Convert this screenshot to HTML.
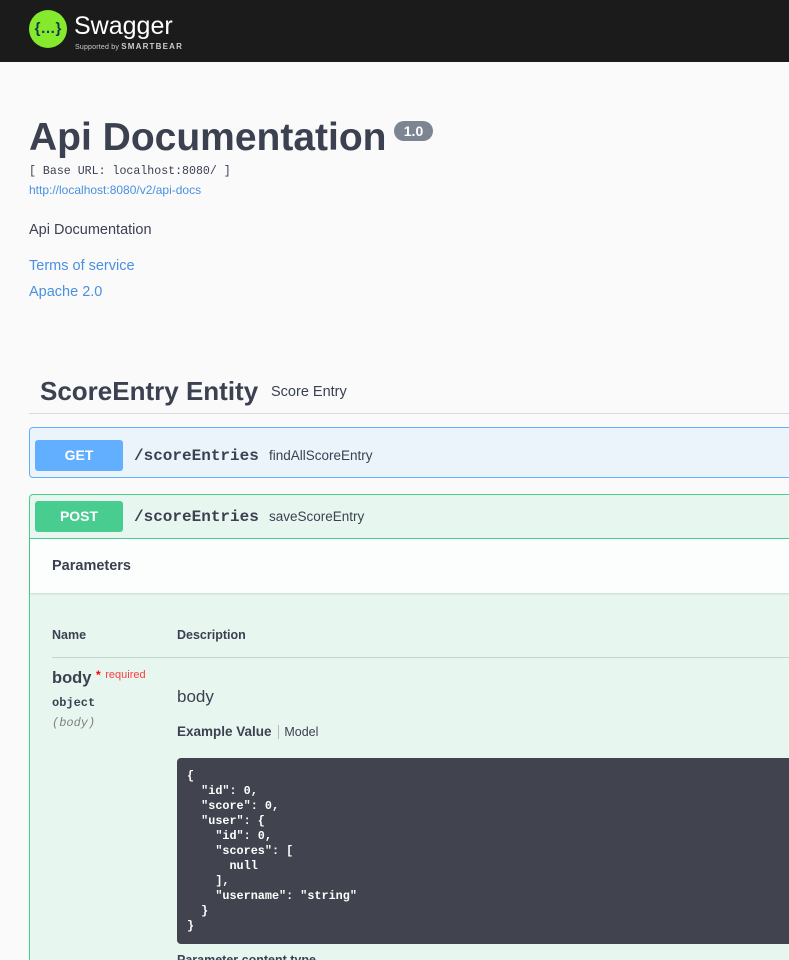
<!DOCTYPE html>
<html><head><style>
*{margin:0;padding:0;box-sizing:border-box}
html,body{width:789px;height:960px;overflow:hidden}
body{background:#fafafa;font-family:"Liberation Sans",sans-serif;color:#3b4151;position:relative}
.hdr{position:absolute;left:0;top:0;width:789px;height:62px;background:#1b1b1b}
.abs{position:absolute;white-space:nowrap}
a{color:#4990e2;text-decoration:none}
.mono{font-family:"Liberation Mono",monospace}
</style></head><body>
<div class="hdr">
 <div class="abs" style="left:29px;top:10px;width:38px;height:38px;border-radius:50%;background:#85ea2d;color:#173647;font-weight:bold;font-size:15px;text-align:center;line-height:37px">{…}</div>
 <div class="abs" style="left:74px;top:12px;color:#fff;font-size:25px">Swagger</div>
 <div class="abs" style="left:75px;top:42px;color:#ccc;font-size:7px;letter-spacing:.2px">Supported by <b style="font-size:8px;letter-spacing:1.2px">SMARTBEAR</b></div>
</div>
<div class="abs" style="left:29px;top:116px;font-size:39px;font-weight:bold">Api Documentation</div>
<div class="abs" style="left:394px;top:121px;width:39px;height:20px;border-radius:10px;background:#7d8492;color:#fff;font-size:14px;font-weight:bold;text-align:center;line-height:20px">1.0</div>
<div class="abs mono" style="left:29px;top:165px;font-size:11.6px">[ Base URL: localhost:8080/ ]</div>
<div class="abs" style="left:29px;top:183px;font-size:12px"><a>http://localhost:8080/v2/api-docs</a></div>
<div class="abs" style="left:29px;top:222px;font-size:14.5px">Api Documentation</div>
<div class="abs" style="left:29px;top:258px;font-size:14.5px"><a>Terms of service</a></div>
<div class="abs" style="left:29px;top:284px;font-size:14.5px"><a>Apache 2.0</a></div>
<div class="abs" style="left:40px;top:376px;font-size:26px;font-weight:bold">ScoreEntry Entity</div>
<div class="abs" style="left:271px;top:384px;font-size:14.5px">Score Entry</div>
<div class="abs" style="left:29px;top:413px;width:760px;height:1px;background:#d8dae0"></div>
<div class="abs" style="left:29px;top:427px;width:770px;height:51px;border:1px solid #61affe;border-radius:4px;background:#ebf3fb"></div>
<div class="abs" style="left:35px;top:440px;width:88px;height:31px;border-radius:3px;background:#61affe;color:#fff;font-weight:bold;font-size:14px;text-align:center;line-height:31px">GET</div>
<div class="abs mono" style="left:134px;top:447px;font-size:16px;font-weight:bold">/scoreEntries</div>
<div class="abs" style="left:269px;top:448px;font-size:13.5px">findAllScoreEntry</div>
<div class="abs" style="left:29px;top:494px;width:770px;height:480px;border:1px solid #49cc90;border-radius:4px;background:#e8f6f0"></div>
<div class="abs" style="left:35px;top:501px;width:88px;height:31px;border-radius:3px;background:#49cc90;color:#fff;font-weight:bold;font-size:14px;text-align:center;line-height:31px">POST</div>
<div class="abs mono" style="left:134px;top:508px;font-size:16px;font-weight:bold">/scoreEntries</div>
<div class="abs" style="left:269px;top:509px;font-size:13.5px">saveScoreEntry</div>
<div class="abs" style="left:30px;top:538px;width:760px;height:55px;background:#fcfdfd;border-top:1px solid #49cc90;box-shadow:0 1px 2px rgba(0,0,0,.12)"></div>
<div class="abs" style="left:52px;top:558px;font-size:14.5px;font-weight:bold">Parameters</div>
<div class="abs" style="left:52px;top:628px;font-size:12.5px;font-weight:bold">Name</div>
<div class="abs" style="left:177px;top:628px;font-size:12.5px;font-weight:bold">Description</div>
<div class="abs" style="left:52px;top:657px;width:740px;height:1px;background:#bfd8cc"></div>
<div class="abs" style="left:52px;top:669px;font-size:16.5px;font-weight:bold">body <span style="color:#f00;font-size:12px;position:relative;top:-4px">*</span> <span style="color:#f93e3e;font-size:11px;font-weight:normal;position:relative;top:-5px">required</span></div>
<div class="abs mono" style="left:52px;top:696px;font-size:12px;font-weight:bold">object</div>
<div class="abs mono" style="left:52px;top:716px;font-size:12px;font-style:italic;color:#808080">(body)</div>
<div class="abs" style="left:177px;top:687px;font-size:17px">body</div>
<div class="abs" style="left:177px;top:724px;font-size:13.5px"><b>Example Value</b> <span style="border-left:1px solid #bbb;margin-left:3px;padding-left:5px;font-size:12.5px">Model</span></div>
<div class="abs mono" style="left:177px;top:758px;width:620px;height:186px;border-radius:4px;background:#41444e;color:#fff;font-size:11.8px;font-weight:bold;line-height:15px;padding:11px 10px;white-space:pre">{
  "id": 0,
  "score": 0,
  "user": {
    "id": 0,
    "scores": [
      null
    ],
    "username": "string"
  }
}</div>
<div class="abs" style="left:177px;top:953px;font-size:12.5px;font-weight:bold">Parameter content type</div>
</body></html>
